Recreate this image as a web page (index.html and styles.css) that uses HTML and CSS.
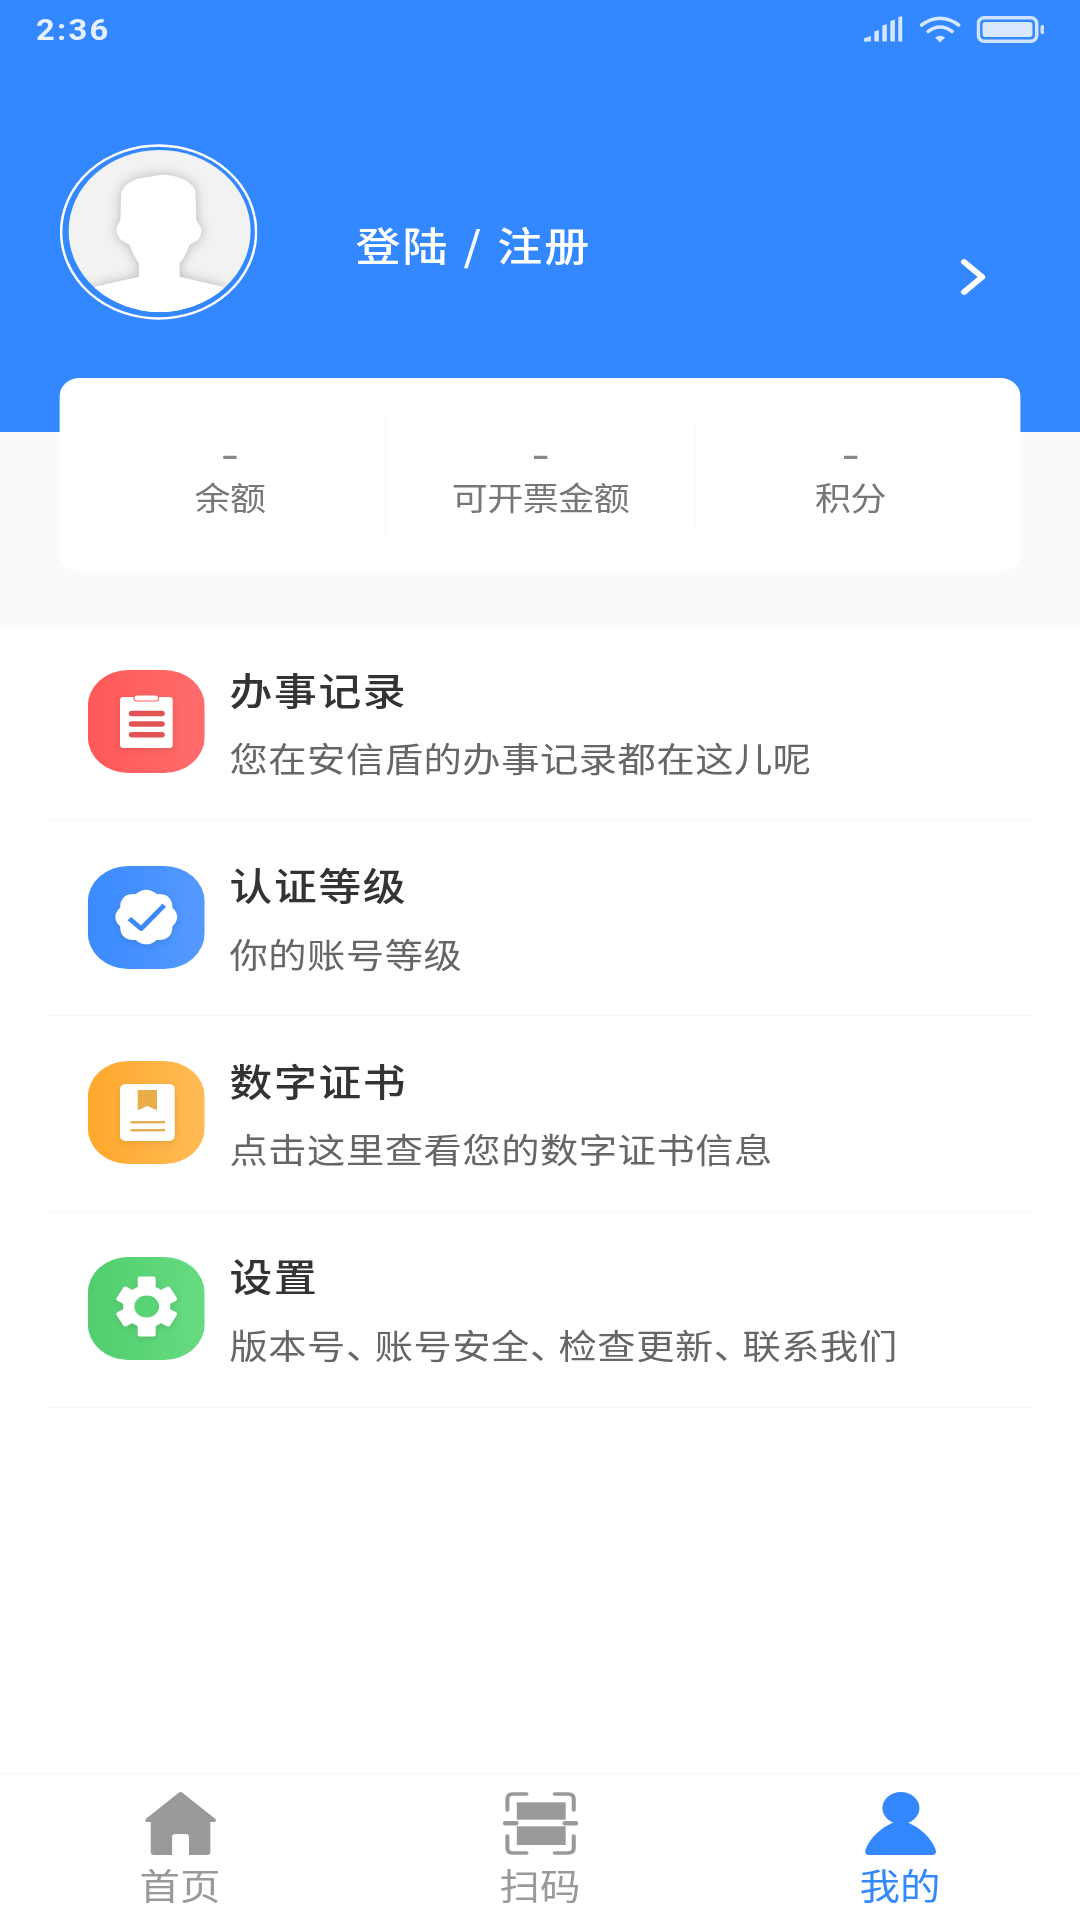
FILE: index.html
```html
<!DOCTYPE html>
<html lang="zh-CN">
<head>
<meta charset="utf-8">
<title>我的</title>
<link rel="stylesheet" href="styles.css">
</head>
<body>
<div class="page">
  <header class="hero">
    <div class="status">
      <span class="time">2:36</span>
      <div class="status-icons">
        <svg class="s-signal" viewBox="0 0 40 26" preserveAspectRatio="none"><path fill="#d6e8ff" d="M1 22.5 8 20v5.5H1zM11.5 15.5 16 14v11.5h-4.5zM19.500 9.500 24 8v17.500h-4.500zM27.500 5 32 3.500v22h-4.500zM35.500 1 40 0v25.500h-4.500z"/></svg>
        <svg class="s-wifi" viewBox="0 0 42 27" preserveAspectRatio="none"><g fill="none" stroke="#d6e8ff" stroke-width="3.6" stroke-linecap="round"><path d="M2.500 9Q21-4.500 39.500 9"/><path d="M9 15.500Q21 6.500 33 15.500"/></g><path fill="#d6e8ff" d="M16 21.500Q21 18 26 21.500L21 26.500z"/></svg>
        <svg class="s-batt" viewBox="0 0 68 27" preserveAspectRatio="none"><rect x="1.800" y="1.800" width="58.500" height="23.400" rx="6" fill="none" stroke="#cfe3ff" stroke-width="3.600"/><rect x="6" y="6" width="50" height="15" rx="3" fill="#d8e9ff"/><rect x="64" y="9" width="4" height="9" rx="2" fill="#cfe3ff"/></svg>
      </div>
    </div>
    <div class="profile">
      <svg class="avatar" viewBox="0 0 198 176" preserveAspectRatio="none">
        <defs><clipPath id="avatarClip"><ellipse cx="100" cy="87" rx="91" ry="81"/></clipPath></defs>
        <ellipse cx="99" cy="88" rx="97.500" ry="86.500" fill="none" stroke="#fff" stroke-width="2.500"/>
        <ellipse cx="100" cy="87" rx="91" ry="81" fill="#f2f2f2"/>
        <g clip-path="url(#avatarClip)">
          <path class="silhouette" fill="#fff" d="M100 31Q90 33 80 34.300Q66 38 61.700 47.700L60.700 76L56.700 84.300Q57 92 61.700 96L70 101Q74 112 79.300 119.300V132.700L35 142.700L20 190H180L163.300 142.700L120 132.700V119.300Q126 112 130 101L138.300 96Q142 92 141.700 84.300L136.700 76L135.700 46Q130 36 116.700 32.700Q108 30 100 31Z"/>
        </g>
      </svg>
      <span class="login">登陆 / 注册</span>
      <svg class="chevron" viewBox="0 0 24 38"><path d="M4 4 20 19 4 34" fill="none" stroke="#fff" stroke-width="5.500" stroke-linecap="round" stroke-linejoin="round"/></svg>
    </div>
  </header>

  <section class="summary">
    <div class="card">
      <div class="stat"><span class="stat-val">–</span><span class="stat-label">余额</span></div>
      <div class="stat"><span class="stat-val">–</span><span class="stat-label">可开票金额</span></div>
      <div class="stat"><span class="stat-val">–</span><span class="stat-label">积分</span></div>
    </div>
  </section>

  <ul class="menu">
    <li class="row">
      <svg class="tile" viewBox="0 0 104 103">
        <defs><linearGradient id="gRed"><stop offset="0" stop-color="#ff5858"/><stop offset="1" stop-color="#ff6c6c"/></linearGradient></defs>
        <rect width="104" height="103" rx="36" fill="url(#gRed)"/>
        <rect class="glyph" x="28.700" y="27" width="46.800" height="51" rx="3" fill="#fff"/>
        <rect x="41" y="25" width="22" height="6" rx="3" fill="#fff" stroke="#ff6060" stroke-width="1"/>
        <g fill="#e25454"><rect x="36.500" y="40.800" width="32" height="5.400" rx="2.700"/><rect x="36.500" y="51.300" width="32" height="5.400" rx="2.700"/><rect x="36.500" y="62" width="32" height="5.400" rx="2.700"/></g>
      </svg>
      <div class="row-text"><h3 class="row-title">办事记录</h3><p class="row-sub">您在安信盾的办事记录都在这儿呢</p></div>
    </li>
    <li class="row">
      <svg class="tile" viewBox="0 0 104 103">
        <defs><linearGradient id="gBlue"><stop offset="0" stop-color="#3a8aff"/><stop offset="1" stop-color="#5599ff"/></linearGradient></defs>
        <rect width="104" height="103" rx="36" fill="url(#gBlue)"/>
        <path class="glyph" fill="#fff" stroke="#fff" stroke-width="2.500" stroke-linejoin="round" d="M74 60Q82.500 51 74 42Q74 28 61 29.500Q52 20.500 43 29.500Q30 28 30 42Q21.500 51 30 60Q30 74 43 72.500Q52 81.500 61 72.500Q74 74 74 60Z"/>
        <path d="M37 52.700 47.400 62.700 68 39.300" fill="none" stroke="#3d88f5" stroke-width="4.500" stroke-linejoin="round"/>
      </svg>
      <div class="row-text"><h3 class="row-title">认证等级</h3><p class="row-sub">你的账号等级</p></div>
    </li>
    <li class="row">
      <svg class="tile" viewBox="0 0 104 103">
        <defs><linearGradient id="gOrange"><stop offset="0" stop-color="#ffa82c"/><stop offset="1" stop-color="#ffbb56"/></linearGradient></defs>
        <rect width="104" height="103" rx="36" fill="url(#gOrange)"/>
        <rect class="glyph" x="28.700" y="23" width="48.600" height="57" rx="5" fill="#fff"/>
        <path d="M44.400 29H61.600V49.300L53 45 44.400 49.300z" fill="#e9ad4a"/>
        <g fill="#e3ad55"><rect x="38" y="60" width="30.700" height="2.400"/><rect x="38" y="68" width="30.700" height="2.400"/></g>
      </svg>
      <div class="row-text"><h3 class="row-title">数字证书</h3><p class="row-sub">点击这里查看您的数字证书信息</p></div>
    </li>
    <li class="row">
      <svg class="tile" viewBox="0 0 104 103">
        <defs><linearGradient id="gGreen"><stop offset="0" stop-color="#50ce6e"/><stop offset="1" stop-color="#68db82"/></linearGradient></defs>
        <rect width="104" height="103" rx="36" fill="url(#gGreen)"/>
        <g class="glyph" transform="translate(52.400 49.500)" fill="#fff">
          <circle r="21"/>
          <rect x="-8" y="-30" width="16" height="60" rx="2"/>
          <rect x="-8" y="-27.500" width="16" height="55" rx="2" transform="rotate(60)"/>
          <rect x="-8" y="-27.500" width="16" height="55" rx="2" transform="rotate(120)"/>
          <circle r="11" fill="#5ad376"/>
        </g>
      </svg>
      <div class="row-text"><h3 class="row-title">设置</h3><p class="row-sub">版本号<span class="punct">、</span>账号安全<span class="punct">、</span>检查更新<span class="punct">、</span>联系我们</p></div>
    </li>
  </ul>

  <nav class="tabbar">
    <div class="tab">
      <svg class="tab-icon" viewBox="0 0 63 63"><path fill="#999" fill-rule="evenodd" d="M31.500 0Q33 0 34 1.500L62.500 27Q64 30 60 30H58V60Q58 63 55 63H39V45Q39 42 36 42H27Q24 42 24 45V63H8Q5 63 5 60V30H3Q-1 30 .5 27L29 1.500Q30 0 31.500 0Z"/></svg>
      <span class="tab-label">首页</span>
    </div>
    <div class="tab">
      <svg class="tab-icon tab-icon-scan" viewBox="0 0 67 63">
        <g fill="none" stroke="#999" stroke-width="3.600" stroke-linecap="round" stroke-linejoin="round"><path d="M21 2H9Q4 2 4 7V18"/><path d="M46 2H58Q63 2 63 7V18"/><path d="M4 44V56Q4 61 9 61H21"/><path d="M63 44V56Q63 61 58 61H46"/></g>
        <g fill="#999"><rect x="12.400" y="10.300" width="43.400" height="17.400"/><rect x="12.400" y="34.300" width="43.400" height="18.700"/><rect x="0" y="29" width="14" height="4.500" rx="2.200"/><rect x="53" y="29" width="14" height="4.500" rx="2.200"/></g>
      </svg>
      <span class="tab-label">扫码</span>
    </div>
    <div class="tab tab-on">
      <svg class="tab-icon" viewBox="0 0 63 63"><g fill="#3388ff"><ellipse cx="31.800" cy="16" rx="16.500" ry="16"/><path d="M31.500 28C18 32 4 44 0 59Q0 63 3 63H60Q63 63 63 59C59 44 45 32 31.500 28Z"/></g></svg>
      <span class="tab-label">我的</span>
    </div>
  </nav>
</div>
</body>
</html>
```

FILE: styles.css
```css
* { box-sizing: border-box; }
html, body { margin: 0; padding: 0; width: 1080px; height: 1920px; overflow: hidden; background: #fff; }
body { font-family: "Noto Sans CJK SC", "Noto Sans", sans-serif; }

/* The source screen is 960 wide and shown stretched to 1080. */
.page {
  width: 960px;
  height: 1920px;
  display: flex;
  flex-direction: column;
  transform: scaleX(1.125);
  transform-origin: 0 0;
  background: #fff;
}

.hero { height: 432px; background: #3388ff; flex: none; }
.status { height: 60px; padding: 0 32px 0 32px; display: flex; align-items: flex-start; justify-content: space-between; }
.time { margin-top: 12px; font: 700 29px/36px Roboto, sans-serif; letter-spacing: 2px; color: #e6f0ff; }
.status-icons { display: flex; margin-top: 16px; }
.s-signal { width: 35.500px; height: 26px; margin-right: 15px; }
.s-wifi { width: 37.300px; height: 27px; margin-right: 13px; }
.s-batt { width: 60.400px; height: 27px; }

.profile { margin-top: 84px; padding: 0 0 0 53px; display: flex; align-items: flex-start; }
.avatar { width: 176px; height: 176px; flex: none; }
.silhouette { filter: drop-shadow(0 0 6px #b5b5b5); }
.login { margin: 72px 0 0 87px; font-size: 40px; font-weight: 500; line-height: 56px; letter-spacing: 1.700px; word-spacing: 2px; color: #fff; white-space: nowrap; }
.chevron { width: 24px; height: 38px; margin: 114px 83px 0 auto; flex: none; }

.summary { background: #fafafa; padding: 0 53.300px 53px; height: 193px; flex: none; }
.card {
  height: 194px;
  margin-top: -54px;
  padding: 40px 13.300px 38px;
  display: grid;
  grid-template-columns: repeat(3, 1fr);
  background: #fff;
  border-radius: 18px;
}
.stat { padding-top: 17px; display: flex; flex-direction: column; align-items: center; border-left: 1px solid #f9f9f9; }
.stat:first-child { border-left: 0; }
.stat-val { height: 38px; font: 700 28px/38px "Noto Sans", sans-serif; color: #888; }
.stat-label { font-size: 32px; line-height: 46px; letter-spacing: -.4px; color: #777; }

.menu { list-style: none; margin: 0 40px 0 39px; padding: 0; flex: none; }
.row { height: 195.670px; padding: 45px 0 0 39px; display: flex; align-items: flex-start; border-bottom: 1px solid #f6f6f6; }
.tile { width: 104px; height: 103px; flex: none; }
.glyph { filter: drop-shadow(0 2px 3px rgba(0,0,0,.1)); }
.row-text { margin-left: 22px; margin-top: -6.500px; }
.row-title { margin: 0; font-size: 38px; font-weight: 500; line-height: 50px; letter-spacing: 1.500px; color: #333; }
.row-sub { margin: 19.500px 0 0; font-size: 34px; line-height: 50px; letter-spacing: .5px; color: #666; white-space: nowrap; }
.punct { letter-spacing: -8.500px; }

.tabbar { margin-top: auto; height: 147px; padding-top: 18px; border-top: 1px solid #f6f6f6; display: grid; grid-template-columns: repeat(3, 1fr); flex: none; }
.tab { display: flex; flex-direction: column; align-items: center; }
.tab-icon { width: 63px; height: 63px; flex: none; }
.tab-icon-scan { width: 67px; }
.tab-label { margin-top: 4px; font-size: 36px; line-height: 50px; color: #999; }
.tab-on .tab-label { color: #3388ff; }
```
